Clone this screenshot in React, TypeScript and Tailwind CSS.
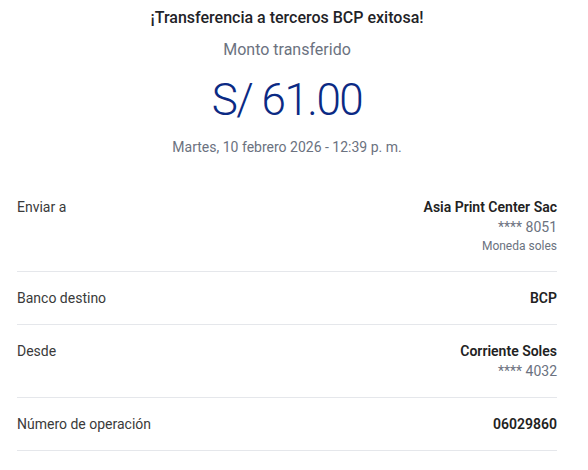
export default function App() {
  const rows = [
    { label: "Enviar a", value: "Asia Print Center Sac", sub: "**** 8051", note: "Moneda soles" },
    { label: "Banco destino", value: "BCP" },
    { label: "Desde", value: "Corriente Soles", sub: "**** 4032" },
    { label: "Número de operación", value: "06029860" },
  ];

  return (
    <div className="w-[588px] h-[470px] bg-white font-['Roboto',sans-serif] overflow-hidden">
      <div className="w-[574px] flex flex-col items-center pt-[8px]">
        <h1 className="text-[16px] leading-[20px] font-medium text-[#1f2328]">
          ¡Transferencia a terceros BCP exitosa!
        </h1>
        <p className="mt-[12px] text-[16px] leading-[20px] text-[#6b7280]">Monto transferido</p>
        <p className="mt-[14px] text-[44px] leading-[52px] font-light tracking-[-1.5px] text-[#0b2a84]">S/ 61.00</p>
        <p className="mt-[12px] text-[14px] leading-[18px] text-[#6b7280]">Martes, 10 febrero 2026 - 12:39 p. m.</p>
      </div>

      <div className="mt-[25px] px-[17px] w-[574px]">
        {rows.map((row, i) => (
          <div key={i} className="flex justify-between py-[16px] border-b border-[#e5e7eb]">
            <span className="text-[14px] leading-[20px] text-[#3a3a3a]">{row.label}</span>
            <div className="flex flex-col items-end">
              <span className="text-[14px] leading-[20px] font-semibold text-[#222]">{row.value}</span>
              {row.sub && <span className="text-[14px] leading-[20px] text-[#6b7280]">{row.sub}</span>}
              {row.note && <span className="text-[12px] leading-[18px] text-[#6b7280]">{row.note}</span>}
            </div>
          </div>
        ))}
      </div>
    </div>
  );
}
